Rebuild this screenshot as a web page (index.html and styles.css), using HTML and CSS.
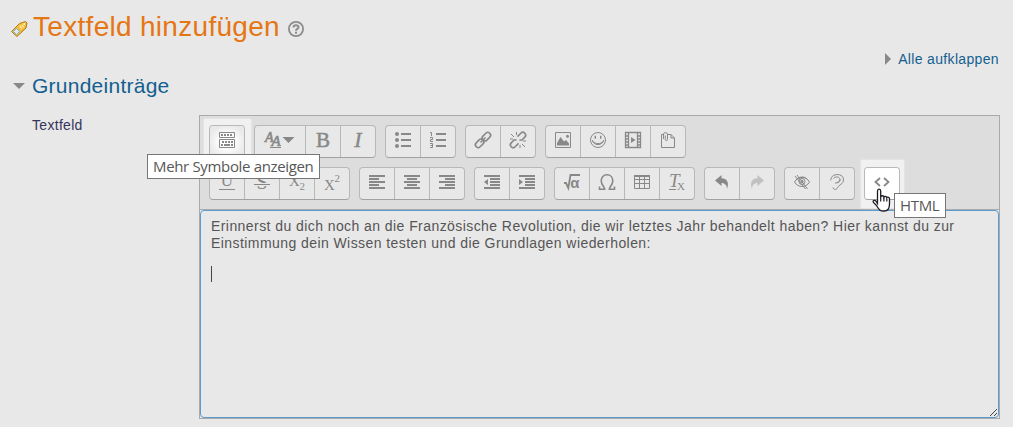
FILE: index.html
```html
<!DOCTYPE html>
<html lang="de">
<head>
<meta charset="utf-8">
<title>Textfeld hinzufügen</title>
<link rel="stylesheet" href="styles.css">
</head>
<body>
<header class="title-row">
  <svg class="tag-icon" width="18" height="18" viewBox="0 0 18 18"><path d="M1.500 11.500 9.500 3.500 15.500 1.500 17 3 16 8 7 16.500Z" fill="#f2bd3a" stroke="#b07a1c"/><path d="M9.500 6 12 8.500M11.500 5 14 7" stroke="#fce9a5" stroke-width="1.500"/><path d="M3.500 11.500 6.500 8.500 9.500 11.500 6.500 14.500Z" fill="#d8ecf5" stroke="#7fb1cb"/><circle cx="14.200" cy="4" r="1" fill="#fff3c4"/></svg>
  <h1 class="title">Textfeld hinzufügen</h1>
  <svg class="help-icon" width="16" height="16" viewBox="0 0 16 16"><circle cx="8" cy="8" r="7.1" fill="none" stroke="#8c8c8c" stroke-width="1.8"/><path d="M5.4 6.4C5.6 3.4 10.7 3.500 10.5 6.3 10.3 8 8 7.8 8 9.7" fill="none" stroke="#8c8c8c" stroke-width="2"/><path d="M7 10.8h2v2H7z" fill="#8c8c8c"/></svg>
</header>
<div class="expand-row"><span class="arrow-right"></span><a class="expand-link">Alle aufklappen</a></div>
<div class="section-row"><span class="arrow-down"></span><h2 class="section-title">Grundeinträge</h2></div>
<main class="field">
  <label class="field-label">Textfeld</label>
  <div class="editor">
    <div class="toolbar">
      <div class="tool-row">
        <div class="group spotlight spot-first"><button class="btn glow"><svg class="icon" viewBox="0 0 16 16"><path d="M.5.5h15v5H.5zM.5 7.500h15v8H.5z" fill="none" stroke="#888"/><path d="M2 3h12M3 10h12" stroke="#888" stroke-width="2" stroke-dasharray="2 1"/><path d="M2 13h2M5 13h6M12 13h2" stroke="#888" stroke-width="2"/></svg></button></div>
        <div class="group"><button class="btn wide"><svg class="icon-wide" width="30" height="18" viewBox="0 0 30 18"><text x="0" y="9.500" class="serif italic" font-size="14" stroke="#888" stroke-width=".6">A</text><text x="6.500" y="14" class="serif italic" font-size="15" stroke="#888" stroke-width=".6">A</text><path d="M5 15.500h11" stroke="#888"/><path d="M17.500 5h12l-6 6z" class="fill"/></svg></button><button class="btn"><svg class="icon" viewBox="0 0 16 16"><text x="8" y="15" text-anchor="middle" class="serif" font-size="21" stroke="#888" stroke-width=".5">B</text></svg></button><button class="btn"><svg class="icon" viewBox="0 0 16 16"><text x="8" y="15" text-anchor="middle" class="serif italic" font-size="22" stroke="#888" stroke-width=".4">I</text></svg></button></div>
        <div class="group"><button class="btn"><svg class="icon" viewBox="0 0 16 16"><path d="M6 2h10M6 8h10M6 14h10" class="thick"/><circle cx="2" cy="2" r="2" class="fill"/><circle cx="2" cy="8" r="2" class="fill"/><circle cx="2" cy="14" r="2" class="fill"/></svg></button><button class="btn"><svg class="icon" viewBox="0 0 16 16"><path d="M6 2h10M6 8h10M6 14h10" class="thick"/><path d="M0 .5h1.500V4M0 5.500h2.500v2H.5v2H3M0 11.500h2.500v4H0M.5 13.500h2" class="line"/></svg></button></div>
        <div class="group"><button class="btn"><svg class="icon" viewBox="0 0 16 16"><g transform="rotate(-45 8 8)" class="line heavy"><rect x="-1.500" y="5.200" width="9.500" height="5.600" rx="2.700"/><rect x="8" y="5.200" width="9.500" height="5.600" rx="2.700"/><path d="M4.500 8h7"/></g></svg></button><button class="btn"><svg class="icon" viewBox="0 0 16 16"><g transform="rotate(-45 8 8)" class="line heavy"><path d="M5.500 5.200H1.200a2.800 2.800 0 0 0 0 5.600H6M10 5.200h4.800a2.800 2.800 0 0 1 0 5.600h-4.300M5.500 5.200 7 7M10.500 10.800 9 9"/></g><path d="M1 2l3 3M6.500 0v3M0 7h3M13 9h3M10 13v3M12 12l3 3" class="line"/></svg></button></div>
        <div class="group"><button class="btn"><svg class="icon" viewBox="0 0 16 16"><path d="M.5.5h15v15H.5z" class="line"/><path d="M2 13.500V11l3.500-6L9 9.500 11 8l3 3.500v2z" class="fill"/><circle cx="12.500" cy="4.300" r="1.500" class="fill"/></svg></button><button class="btn"><svg class="icon" viewBox="0 0 16 16"><circle cx="8" cy="8" r="7.500" class="line"/><path d="M2.300 8c.8 6.100 10.600 6.100 11.400 0M3 9.300c1.400 3 8.600 3 10 0" class="line"/><path d="M5.300 3.800v3M10.700 3.800v3" stroke="#888" stroke-width="1.400"/></svg></button><button class="btn"><svg class="icon" viewBox="0 0 16 16"><path d="M.5.5h15v15H.5zM3.500 0v16M12.500 0v16M0 4h3.500M0 7h3.500M0 10h3.500M0 13h3.500M12.500 4H16M12.500 7H16M12.500 10H16M12.500 13H16" class="line" stroke-width="1.300"/><path d="M6 5l4.500 3L6 11z" class="fill"/></svg></button><button class="btn"><svg class="icon" viewBox="0 0 16 16"><path d="M3 2.500H1.500v13h13V6L11 2.500H8M11 2.500V6h3.500M3.500 7V2C3.500.2 7.500.2 7.500 2v5.500c0 1.500-2.200 1.500-2.200 0V3.500" class="line"/></svg></button></div>
      </div>
      <div class="tool-row">
        <div class="group"><button class="btn"><svg class="icon" viewBox="0 0 16 16"><text x="8" y="12" text-anchor="middle" class="serif" font-size="17">U</text><path d="M0 15.500h16" class="line"/></svg></button><button class="btn"><svg class="icon" viewBox="0 0 16 16"><text x="8" y="15" text-anchor="middle" class="serif" font-size="20">S</text><path d="M0 10.500h16" stroke="#e8e8e8" stroke-width="3"/><path d="M0 10.500h16" class="line"/></svg></button><button class="btn"><svg class="icon" viewBox="0 0 16 16"><text x="0" y="12" class="serif" font-size="15">X</text><text x="10.500" y="16" class="serif" font-size="11">2</text></svg></button><button class="btn"><svg class="icon" viewBox="0 0 16 16"><text x="0" y="16" class="serif" font-size="15">X</text><text x="10.500" y="8" class="serif" font-size="11">2</text></svg></button></div>
        <div class="group"><button class="btn"><svg class="icon" viewBox="0 0 16 16"><path d="M0 2h16M0 5h10M0 8h16M0 11h10M0 14h16" class="bars"/></svg></button><button class="btn"><svg class="icon" viewBox="0 0 16 16"><path d="M0 2h16M3 5h10M0 8h16M3 11h10M0 14h16" class="bars"/></svg></button><button class="btn"><svg class="icon" viewBox="0 0 16 16"><path d="M0 2h16M6 5h10M0 8h16M6 11h10M0 14h16" class="bars"/></svg></button></div>
        <div class="group"><button class="btn"><svg class="icon" viewBox="0 0 16 16"><path d="M0 2h16M6 5h10M6 8h10M6 11h10M0 14h16" class="bars"/><path d="M4 5v6L0 8z" class="fill"/></svg></button><button class="btn"><svg class="icon" viewBox="0 0 16 16"><path d="M0 2h16M6 5h10M6 8h10M6 11h10M0 14h16" class="bars"/><path d="M0 5v6l4-3z" class="fill"/></svg></button></div>
        <div class="group"><button class="btn"><svg class="icon" viewBox="0 0 16 16"><path d="M0 9h2l2.300 5L6.500 1H16" fill="none" stroke="#888" stroke-width="1.800"/><text x="6.300" y="14" class="alpha">α</text></svg></button><button class="btn"><svg class="icon" viewBox="0 0 16 16"><path d="M.5 12.500v2.700h5.200c0-2.200-3.500-4.400-3.500-8.200C2.200 3.200 4.600.8 8 .8s5.800 2.400 5.800 6.200c0 3.800-3.500 6-3.500 8.200h5.200v-2.700" fill="none" stroke="#888" stroke-width="1.600"/></svg></button><button class="btn"><svg class="icon" viewBox="0 0 16 16"><path d="M.5 1.500h15v13H.5zM0 5.500h16M0 9.500h16M5.500 2v13M10.500 2v13" class="line"/><path d="M0 2h16" class="bars"/></svg></button><button class="btn"><svg class="icon" viewBox="0 0 16 16"><text x="0" y="13" class="serif italic" font-size="19">T</text><text x="8" y="16" class="serif" font-size="11">X</text><path d="M0 15.500h7" class="line"/></svg></button></div>
        <div class="group"><button class="btn"><svg class="icon" viewBox="0 0 16 16"><path d="M1 6.500 7.500 1v3.300C13 4.300 15.500 8.500 13 15c0-3.500-2-6-5.500-6v3z" class="fill"/></svg></button><button class="btn"><svg class="icon faded" viewBox="0 0 16 16"><path d="M15 6.500 8.500 1v3.300C3 4.300.5 8.500 3 15c0-3.500 2-6 5.500-6v3z" class="fill"/></svg></button></div>
        <div class="group"><button class="btn"><svg class="icon" viewBox="0 0 16 16"><path d="M.5 8C4 1.800 12 1.800 15.500 8 12 14 4 14 .5 8zM2 6c4-4 9-4 12 0M3 1l10.500 14M1 2l10.500 13" class="line"/><circle cx="8" cy="7.500" r="3" class="line"/><circle cx="8" cy="7.500" r="1.500" class="fill"/></svg></button><button class="btn"><svg class="icon" viewBox="0 0 16 16"><path d="M1.800 6.500C1.500-1.200 14.500-1.500 14.500 5.700c0 4.700-5 5.200-6 8-1 2.400-4 2.300-4.500-.3M4.500 4.500c1.800-2.400 6.500-2 6.500 1.300 0 2.400-2 3.300-5 3.200M11 5.500c0 2-1.400 2.300-2.500 2.500" class="line"/></svg></button></div>
        <div class="group spotlight spot-last"><button class="btn white"><svg class="icon" viewBox="0 0 16 16"><path d="M6 4 1.500 8 6 12M10 4l4.500 4L10 12" fill="none" stroke="#888" stroke-width="1.800"/></svg></button></div>
      </div>
    </div>
    <div class="content">
      <p class="para">Erinnerst du dich noch an die Französische Revolution, die wir letztes Jahr behandelt haben? Hier kannst du zur<br>Einstimmung dein Wissen testen und die Grundlagen wiederholen:</p>
      <div class="caret"></div>
      <svg class="resize" width="9" height="9" viewBox="0 0 9 9"><path d="M1 8 8 1M5 8l3-3" stroke="#444" stroke-width="1"/></svg>
    </div>
  </div>
</main>
<div class="tooltip tip-symbols"><span>Mehr Symbole anzeigen</span></div>
<div class="tooltip tip-html"><span>HTML</span></div>
<svg class="cursor" width="19" height="25" viewBox="0 0 19 25"><path d="M5.500 15.500V3C5.500.4 8.700.4 8.700 3v6c.5-1.800 3-1.600 3.200.2.6-1.300 2.700-1 2.900.5.8-1 2.700-.5 2.700 1V16c0 4-1.500 7-5.500 7-4.500 0-5-1.500-7.500-5.500-1-1.600-3.200-2.500-3.400-3.800C.8 12 3.600 12 4.500 14z" fill="#fff" stroke="#1b1b24" stroke-width="1.300"/><path d="M8.700 9v4.500M11.900 9.500V13.500M14.800 10.500v3" stroke="#1b1b24" stroke-width="1.200"/></svg>
</body>
</html>
```
FILE: styles.css
```css
* { box-sizing: border-box; }
body {
  margin: 0;
  width: 1013px;
  height: 427px;
  overflow: hidden;
  background: #e8e8e8;
  font: 14px/17px "Liberation Sans", Arial, sans-serif;
  color: #555;
}
.title-row { display: flex; height: 50px; padding-left: 10px; }
.tag-icon { margin-top: 20px; }
.title {
  margin: 7px 0 0 5px;
  width: 255px;
  font-size: 28px;
  line-height: 40px;
  font-weight: 400;
  letter-spacing: .3px;
  color: #e57614;
  white-space: nowrap;
}
.help-icon { margin-top: 21px; }
.expand-row { display: flex; justify-content: flex-end; height: 23px; padding-right: 14px; }
.expand-link { color: #136090; letter-spacing: .34px; line-height: 18px; }
.arrow-right {
  margin: 3px 7px 0 0;
  height: 12px;
  border: solid transparent;
  border-width: 6px 0 6px 6px;
  border-left-color: #888;
}
.section-row { display: flex; height: 42px; padding-left: 13px; }
.arrow-down {
  height: 6px;
  margin: 10px 7px 0 0;
  border: solid transparent;
  border-width: 6px 6px 0;
  border-top-color: #888;
}
.section-title { margin: 0; color: #136090; font-size: 21px; line-height: 26px; font-weight: 400; letter-spacing: .25px; }
.field { display: flex; }
.field-label { width: 199px; padding: 2px 0 0 32px; color: #35355c; letter-spacing: .3px; }
.editor { display: flex; flex-direction: column; width: 801px; height: 304px; border: 1px solid #aaa; }
.toolbar {
  display: flex;
  flex-direction: column;
  gap: 9px;
  height: 94px;
  padding: 9px;
  background: #ddd;
  border-bottom: 1px solid #aaa;
}
.tool-row { display: flex; gap: 9px; }
.group {
  display: flex;
  flex: none;
  height: 33px;
  border: 1px solid #b8b8b8;
  border-bottom-color: #a2a2a2;
  border-radius: 4px;
  background: #e8e8e8;
}
.btn {
  width: 35px;
  height: 31px;
  padding: 6px 0 0;
  border: 0;
  border-right: 1px solid #b8b8b8;
  background: none;
  display: flex;
  justify-content: center;
}
.btn:last-child { width: 34px; border-right: 0; }
.btn.wide { width: 51px; }
.btn.glow { background: radial-gradient(#fff 25%, #e9e9e9 78%); border-radius: 3px; }
.btn.white { background: #fff; border-radius: 3px; }
.toolbar { position: relative; z-index: 0; }
.spotlight { position: relative; }
.spotlight::before {
  content: "";
  position: absolute;
  z-index: -1;
  background: #f1f1f1;
  box-shadow: 0 0 2px #f1f1f1;
}
.spot-first::before { inset: -7px -7px -3px -6px; }
.spot-last::before { inset: -8px -5px -9px -4px; }
.icon { width: 16px; height: 16px; overflow: visible; }
.icon-wide { overflow: visible; }
.faded { opacity: .4; }
.fill { fill: #888; }
.line { fill: none; stroke: #888; }
.heavy { stroke-width: 1.6; }
.bars, .thick { fill: none; stroke: #888; stroke-width: 2; }
.serif { font-family: "Liberation Serif", serif; fill: #888; }
.italic { font-style: italic; }
.alpha { font: bold 15px "Liberation Sans", sans-serif; fill: #888; }
.content {
  position: relative;
  flex: 1;
  padding: 7px 10px;
  border: 1px solid #5c9bd0;
  border-radius: 4px;
}
.para { margin: 0; letter-spacing: .43px; white-space: nowrap; }
.caret { width: 1px; height: 16px; margin-top: 14px; background: #444; }
.resize { position: absolute; right: 0; bottom: 0; }
.tooltip {
  position: absolute;
  z-index: 2;
  background: #fff;
  border: 1px solid #767676;
  color: #575757;
  font: 15px/22px "Open Sans", sans-serif;
  letter-spacing: -.34px;
  white-space: nowrap;
}
.tip-symbols { left: 147px; top: 154px; width: 173px; height: 25px; padding-left: 5px; }
.tip-html { left: 894px; top: 193px; width: 52px; height: 25px; padding-left: 5px; }
.cursor { position: absolute; z-index: 3; left: 872px; top: 188px; }
```
